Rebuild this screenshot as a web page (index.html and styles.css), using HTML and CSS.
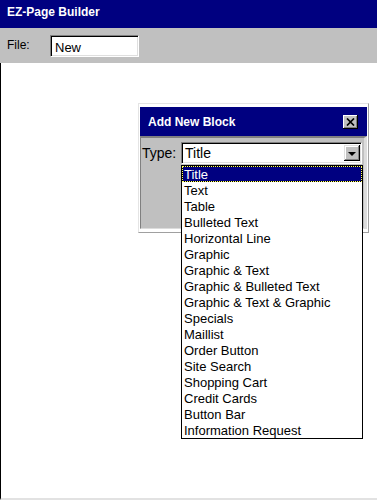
FILE: index.html
```html
<!DOCTYPE html>
<html lang="en">
<head>
  <meta charset="UTF-8">
  <title>EZ-Page Builder</title>
  <link rel="stylesheet" href="styles.css">
</head>
<body>
  <div class="titlebar">EZ-Page Builder</div>
  <div class="toolbar">
    <label for="file">File:</label>
    <input id="file" class="field" type="text" value="New">
  </div>

  <div class="canvas">
    <div class="dialog">
      <div class="dlg-title">
        <span>Add New Block</span>
        <span class="close">
          <svg width="9" height="8" viewBox="0 0 9 8"><path d="M1 0.5 L8 7.5 M8 0.5 L1 7.5" stroke="#000" stroke-width="1.7" fill="none"/></svg>
        </span>
      </div>
      <div class="dlg-body">
        <div class="row">
          <span class="lbl">Type:</span>
          <div class="combo">
            <span class="combo-text">Title</span>
            <span class="drop"><span class="arrow"></span></span>
          </div>
        </div>
      </div>
    </div>

    <ul class="listbox">
      <li class="sel">Title</li>
      <li>Text</li>
      <li>Table</li>
      <li>Bulleted Text</li>
      <li>Horizontal Line</li>
      <li>Graphic</li>
      <li>Graphic &amp; Text</li>
      <li>Graphic &amp; Bulleted Text</li>
      <li>Graphic &amp; Text &amp; Graphic</li>
      <li>Specials</li>
      <li>Maillist</li>
      <li>Order Button</li>
      <li>Site Search</li>
      <li>Shopping Cart</li>
      <li>Credit Cards</li>
      <li>Button Bar</li>
      <li>Information Request</li>
    </ul>
  </div>
</body>
</html>
```

FILE: styles.css
```css
body { margin: 0; font-family: "Liberation Sans", Arial, sans-serif; font-size: 13px; color: #000; background: #fff; }
.titlebar { height: 28px; box-sizing: border-box; background: #000080; color: #fff; font-weight: bold; font-size: 12px; line-height: 14px; padding: 5px 0 0 7px; }
.toolbar { height: 35px; box-sizing: border-box; background: #c0c0c0; display: flex; align-items: center; padding: 0 0 0 7px; }
.toolbar label { font-size: 12px; width: 43px; margin-top: -1px; }
.field { width: 89px; height: 22px; box-sizing: border-box; margin: 1px 0 0; padding: 2px 4px 0; font-family: inherit; font-size: 13px; background: #fff; border: 1px solid; border-color: #808080 #fff #fff #808080; box-shadow: inset 1px 1px 0 #000, inset -1px -1px 0 #dfdfdf; outline: none; }

.canvas { position: relative; height: 435px; border-left: 1px solid #000; border-bottom: 2px solid #e2e2e2; }

.dialog { position: absolute; left: 137px; top: 40px; width: 231px; height: 130px; box-sizing: border-box; background: #fff; border: 1px solid; border-color: #e4e4e4 #a0a0a0 #a0a0a0 #e4e4e4; padding: 3px 1px 2px; }
.dlg-title { height: 29px; background: #000080; color: #fff; font-weight: bold; font-size: 12px; display: flex; align-items: center; justify-content: space-between; padding: 0 9px 0 8px; }
.close { width: 15px; height: 14px; box-sizing: border-box; background: #c0c0c0; display: flex; align-items: center; justify-content: center; box-shadow: inset -1px -1px 0 #000, inset 1px 1px 0 #fff, inset -2px -2px 0 #808080; }
.dlg-body { height: 93px; box-sizing: border-box; background: #c0c0c0; border: 1px solid; border-color: #808080 #dcdcdc #dcdcdc #808080; border-width: 2px 3px 1px 1px; padding: 4px 0 0 1px; font-size: 14px; }
.row { display: flex; align-items: center; }
.lbl { width: 39px; }
.combo { width: 181px; height: 22px; box-sizing: border-box; background: #fff; display: flex; align-items: center; justify-content: space-between; border: 1px solid; border-color: #808080 #fff #fff #808080; box-shadow: inset 1px 1px 0 #000, inset -1px -1px 0 #dfdfdf; padding: 0 1px 0 3px; }
.drop { width: 16px; height: 16px; box-sizing: border-box; background: #c0c0c0; display: flex; align-items: center; justify-content: center; box-shadow: inset -1px -1px 0 #000, inset 1px 1px 0 #dfdfdf, inset -2px -2px 0 #808080, inset 2px 2px 0 #fff; }
.arrow { width: 0; height: 0; border-left: 4px solid transparent; border-right: 4px solid transparent; border-top: 4px solid #000; margin-top: 1px; }

.listbox { position: absolute; left: 180px; top: 102px; width: 182px; box-sizing: border-box; margin: 0; padding: 0; list-style: none; background: #fff; border: 1px solid #000; }
.listbox li { height: 16px; line-height: 17px; padding-left: 2px; white-space: nowrap; }
.listbox li.sel { box-sizing: border-box; color: #fff; padding-left: 1px; line-height: 15px; border: 1px dotted #ffff60; background: linear-gradient(#000080, #000080) padding-box, linear-gradient(#000, #000) border-box; }
```
